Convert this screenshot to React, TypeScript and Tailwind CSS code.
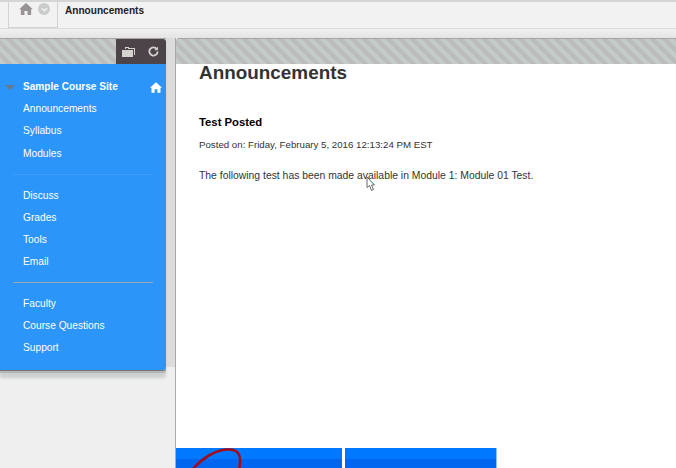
import React from "react";

const sans = "font-['Liberation_Sans',Arial,sans-serif]";

function Item({ label }: { label: string }) {
  return <div className="h-[22px] pl-[23px] text-[10.2px] leading-[22px] text-white">{label}</div>;
}

function Home({ className, fill }: { className: string; fill: string }) {
  return (
    <svg viewBox="0 0 16 14" className={className} fill={fill}>
      <path d="M8 0 L16 7.2 L14 7.2 L14 14 L9.8 14 L9.8 9.4 L6.2 9.4 L6.2 14 L2 14 L2 7.2 L0 7.2 Z" />
    </svg>
  );
}

export default function App() {
  return (
    <div className={`${sans} relative flex h-[468px] w-[676px] flex-col overflow-hidden bg-[#efefef]`}>
      <div className="h-[2px] shrink-0 bg-[#d4d6d5]" />
      <div className="flex h-[27px] shrink-0 items-stretch border-b border-[#dcdcdc] bg-[#f2f2f2] pl-[8px]">
        <div className="flex w-[50px] items-start gap-[5px] border-x border-b border-[#d0d5d3] pl-[10px] pt-[1px]">
          <Home className="h-[12px] w-[14px]" fill="#999494" />
          <div className="flex h-[12px] w-[12px] items-center justify-center rounded-full bg-[#c9cccc]">
            <svg viewBox="0 0 8 8" className="h-[7px] w-[7px]" fill="none" stroke="#f2f2f2" strokeWidth="1.6">
              <path d="M1 2.5 L4 5.5 L7 2.5" />
            </svg>
          </div>
        </div>
        <div className="pl-[7px] pt-[1px] text-[10.1px] font-bold leading-[16px] text-[#222]">Announcements</div>
      </div>

      <div className="flex min-h-0 flex-1 bg-[linear-gradient(#f0f0f0_0,#e4e4e4_9px,#efefef_9px)] pt-[9px]">
        <div className="w-[175px] shrink-0">
          <div className="h-[329px] bg-[#dcdcdc] pr-[9px]">
            <div className="rounded-br-[3px] shadow-[0_1px_0_#777,0_3px_0_#b5b5b5,0_8px_3px_#ccd0cf]">
              <div className="flex h-[26px] border-t border-[#a8a4a4]">
                <div className="flex-1 bg-[repeating-linear-gradient(45deg,#c3ccc9_0,#c3ccc9_4.25px,#bdbcbc_4.25px,#bdbcbc_8.5px)]" />
                <div className="flex w-[50px] items-center justify-between rounded-tr-[3px] bg-[#4c4448] pl-[6px] pr-[7px]">
                  <svg viewBox="0 0 13 10" className="h-[10px] w-[13px]" fill="#d5d3cd">
                    <path d="M3 0 H7 V1 H13 V8 H12 V2 H6 V1 H4 V2 H3 Z" />
                    <path d="M0 3 H11 V10 H0 Z" />
                  </svg>
                  <svg viewBox="0 0 12 12" className="h-[11px] w-[11px]" fill="none" stroke="#d5d3cd" strokeWidth="2">
                    <path d="M9.8 3.5 A4.5 4.5 0 1 0 10.5 6" />
                    <path d="M10.8 0.5 V4.5 H7" fill="#d5d3cd" stroke="none" />
                  </svg>
                </div>
              </div>
              <div className="h-[306px] rounded-br-[3px] bg-[#2b95fa] pt-[12px]">
                <div className="flex h-[22px] items-center">
                  <div className="ml-[5px] h-0 w-0 border-x-[5px] border-t-[5px] border-x-transparent border-t-[#66798c]" />
                  <div className="ml-[8px] flex-1 text-[10.1px] font-bold text-white">Sample Course Site</div>
                  <Home className="mr-[4px] h-[11px] w-[12px]" fill="#ffffff" />
                </div>
                <Item label="Announcements" />
                <Item label="Syllabus" />
                <div className="pt-[1px]">
                  <Item label="Modules" />
                </div>
                <div className="mx-[13px] mb-[10px] mt-[9px] h-px bg-[#3f9ff5]" />
                <Item label="Discuss" />
                <Item label="Grades" />
                <Item label="Tools" />
                <Item label="Email" />
                <div className="mx-[13px] mb-[10px] mt-[9px] h-px bg-[#9aa7b2]" />
                <Item label="Faculty" />
                <Item label="Course Questions" />
                <Item label="Support" />
              </div>
            </div>
          </div>
        </div>

        <div className="flex min-w-0 flex-1 flex-col border-l border-[#a9a9a9] bg-white">
          <div className="h-[26px] shrink-0 rounded-tl-[3px] border-t border-[#a8a4a4] bg-[repeating-linear-gradient(45deg,#c3ccc9_0,#c3ccc9_4.25px,#bdbcbc_4.25px,#bdbcbc_8.5px)]" />
          <div className="flex-1 pl-[23px]">
            <h1 className="text-[18.9px] font-bold leading-[18px] text-[#333]">Announcements</h1>
            <div className="mt-[32px] text-[11.3px] font-bold leading-[16px] text-black">Test Posted</div>
            <div className="mt-[8px] text-[9.7px] leading-[14px] text-[#333]">Posted on: Friday, February 5, 2016 12:13:24 PM EST</div>
            <div className="mt-[16px] text-[10.38px] leading-[16px] text-[#333]">The following test has been made available in Module 1: Module 01 Test.</div>
          </div>
          <div className="flex h-[20px] shrink-0 gap-[3px]">
            <div className="relative w-[166px] overflow-hidden bg-[linear-gradient(#0078ff_0,#0078ff_11px,#0066f0_11px)]">
              <svg viewBox="0 0 70 20" className="absolute left-0 top-0 h-[20px] w-[70px]" fill="none" stroke="#a80a14" strokeWidth="2.5">
                <path d="M16 22 C26 10 40 1 54 1.5 C63 2 66 8 63 22" />
              </svg>
            </div>
            <div className="w-[152px] border-r border-[#8fc4fb] bg-[linear-gradient(#0078ff_0,#0078ff_11px,#0066f0_11px)]" />
          </div>
        </div>
      </div>

      <svg viewBox="0 0 10 16" className="absolute left-[366px] top-[176px] h-[16px] w-[10px]" fill="#fff" stroke="#666" strokeWidth="1">
        <path d="M1 1 L1 11.5 L3.5 9.5 L5.5 14.5 L7.5 13.5 L5.5 9 L8.5 9 Z" />
      </svg>
    </div>
  );
}
